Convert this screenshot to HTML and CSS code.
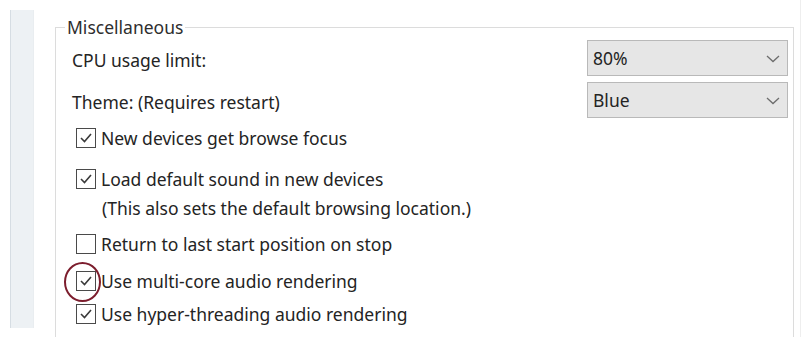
FILE: index.html
```html
<!DOCTYPE html>
<html lang="en">

<head>
  <meta charset="UTF-8">
  <meta name="viewport" content="width=device-width, initial-scale=1.0">
  <title>Settings</title>
  <link rel="stylesheet" href="styles.css">
</head>

<body>
  <div class="page">
    <div class="rail"></div>

    <fieldset class="group">
      <legend>Miscellaneous</legend>

      <div class="field-row">
        <span class="field-label">CPU usage limit:</span>
        <div class="combo">
          <span>80%</span>
          <svg class="chevron" width="14" height="8" viewBox="0 0 14 8"><path d="M1 1 L7 6.5 L13 1" fill="none" stroke="#6d6d6d" stroke-width="1.3"/></svg>
        </div>
      </div>

      <div class="field-row theme-row">
        <span class="field-label">Theme: (Requires restart)</span>
        <div class="combo">
          <span>Blue</span>
          <svg class="chevron" width="14" height="8" viewBox="0 0 14 8"><path d="M1 1 L7 6.5 L13 1" fill="none" stroke="#6d6d6d" stroke-width="1.3"/></svg>
        </div>
      </div>

      <label class="check r1">
        <span class="box"><svg width="16" height="16" viewBox="0 0 16 16"><path d="M3 8 L6.5 11.5 L13 4" fill="none" stroke="#3a3a3a" stroke-width="1.6"/></svg></span>
        New devices get browse focus
      </label>

      <label class="check r2">
        <span class="box"><svg width="16" height="16" viewBox="0 0 16 16"><path d="M3 8 L6.5 11.5 L13 4" fill="none" stroke="#3a3a3a" stroke-width="1.6"/></svg></span>
        Load default sound in new devices
      </label>
      <div class="note">(This also sets the default browsing location.)</div>

      <label class="check r3">
        <span class="box"></span>
        Return to last start position on stop
      </label>

      <label class="check r4">
        <span class="box"><svg width="16" height="16" viewBox="0 0 16 16"><path d="M3 8 L6.5 11.5 L13 4" fill="none" stroke="#3a3a3a" stroke-width="1.6"/></svg></span>
        Use multi-core audio rendering
        <span class="mark"></span>
      </label>

      <label class="check r5">
        <span class="box"><svg width="16" height="16" viewBox="0 0 16 16"><path d="M3 8 L6.5 11.5 L13 4" fill="none" stroke="#3a3a3a" stroke-width="1.6"/></svg></span>
        Use hyper-threading audio rendering
      </label>
    </fieldset>

    <div class="edge"></div>
  </div>
</body>

</html>
```

FILE: styles.css
```css
/* page */
body {
  margin: 0;
  background-color: #fff;
  font-family: "Noto Sans", "Open Sans", sans-serif;
  font-size: 17.5px;
  color: #242424;
  overflow: hidden;
}

.page {
  display: flex;
  height: 337px;
  padding: 15px 0 0 10px;
  box-sizing: border-box;
  overflow: hidden;
}

/* left rail */
.rail {
  width: 22px;
  height: 318px;
  margin-top: -5px;
  background-color: #edf1f4;
  border-left: 1px solid #d6dde3;
  border-right: 1px solid #e9edf0;
}

/* group box */
.group {
  flex: 1;
  margin: 0 0 0 21px;
  padding: 1px 5px 0 16px;
  height: 322px;
  box-sizing: border-box;
  border: 1px solid #dcdcdc;
  border-bottom: none;
  min-width: 0;
}

.group legend {
  padding: 0 2px;
  margin-left: -7px;
  line-height: 24px;
  color: #2e2e2e;
}

.field-row {
  display: flex;
  align-items: center;
  justify-content: space-between;
  height: 36px;
}

.theme-row {
  margin-top: 6px;
}

.field-label {
  padding-top: 4px;
}

.combo {
  width: 201px;
  height: 36px;
  box-sizing: border-box;
  display: flex;
  align-items: center;
  justify-content: space-between;
  padding: 0 7px 0 5px;
  background-color: #e6e6e6;
  border: 1px solid #b9b9b9;
}

.chevron {
  margin-top: 2px;
}

/* checkboxes */
.check {
  position: relative;
  display: flex;
  align-items: center;
  height: 30px;
  margin-left: 4px;
}

.box {
  width: 18px;
  height: 18px;
  margin-right: 5px;
  border: 1px solid #4a4a4a;
  display: flex;
  align-items: center;
  justify-content: center;
  background-color: #fff;
}

.r1 {
  margin-top: 5px;
}

.r2 {
  margin-top: 11px;
}

.note {
  height: 24px;
  line-height: 24px;
  margin: 2px 0 0 30px;
}

.r3 {
  margin-top: 9px;
}

.r4 {
  margin-top: 7px;
}

.r5 {
  margin-top: 3px;
}

/* red circle drawn over the checkbox */
.mark {
  position: absolute;
  left: -12px;
  top: -4px;
  width: 33px;
  height: 36px;
  border: 2px solid #7c1d2d;
  border-radius: 50%;
}

.edge {
  width: 1px;
  margin-left: 6px;
  margin-top: -15px;
  background-color: #eeeeee;
}
```
